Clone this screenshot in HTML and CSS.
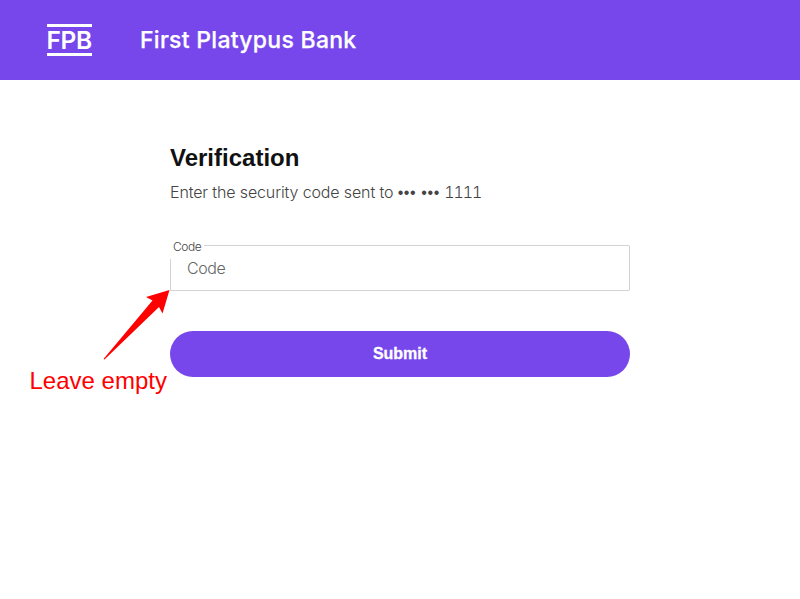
FILE: index.html
```
<!DOCTYPE html>
<html lang="en">
<head>
<meta charset="utf-8">
<title>First Platypus Bank</title>
<link rel="stylesheet" href="styles.css">
</head>
<body>
<header class="header">
  <div class="logo"><span class="logo-text">FPB</span></div>
  <div class="bank-name">First Platypus Bank</div>
</header>
<main class="content">
  <h1 class="title">Verification</h1>
  <p class="subtitle">Enter the security code sent to <span class="dots">••• •••</span> <span class="digits">1111</span></p>
  <form class="form">
    <div class="field">
      <label class="field-label" for="code">Code</label>
      <input class="field-input" id="code" type="text" placeholder="Code">
    </div>
    <button class="submit" type="button">Submit</button>
  </form>
</main>
<div class="note">
  <svg class="note-arrow" width="68" height="72" viewBox="0 0 68 72"><path d="M66.5 0 L43 7 L49.5 10.5 L0.5 69 L1.5 69.5 L56 17 L59.5 23.5 Z" fill="#f00"/></svg>
  <span class="note-text">Leave empty</span>
</div>
</body>
</html>
```

FILE: styles.css
```
* { box-sizing: border-box; }
body {
  margin: 0;
  background: #fff;
  color: #111;
  font-family: Inter, "Liberation Sans", sans-serif;
}
.header {
  display: flex;
  align-items: center;
  gap: 48px;
  height: 80px;
  padding-left: 47px;
  background: #7747ec;
  color: #fff;
}
.logo {
  width: 45px;
  height: 32px;
  border-top: 3px solid #fff;
  border-bottom: 3px solid #fff;
  font: 600 24.5px/27px Inter, sans-serif;
  white-space: nowrap;
}
.logo-text { letter-spacing: -0.3px; margin-left: -0.5px; }
.bank-name {
  font: 500 23px/32px Inter, sans-serif;
  letter-spacing: 0.28px;
  -webkit-text-stroke: 0.25px #fff;
  white-space: nowrap;
}
.content {
  width: 460px;
  margin: 0 auto;
  padding-top: 62px;
}
.title {
  margin: 0;
  font: 700 24px/32px "Liberation Sans", sans-serif;
}
.subtitle {
  height: 24px;
  margin: 6px 0 0;
  font-size: 16px;
  font-weight: 300;
  line-height: 24px;
  letter-spacing: -0.13px;
  color: #444;
  white-space: nowrap;
}
.dots {
  font-family: "Liberation Sans", sans-serif;
  letter-spacing: 0.6px;
}
.digits {
  font-variant-numeric: tabular-nums;
  letter-spacing: -1.1px;
}
.form { margin-top: 41px; }
.field {
  position: relative;
  height: 46px;
}
.field-input {
  display: block;
  width: 100%;
  height: 46px;
  padding: 0 16px 1px;
  border: 1px solid #d3d3d6;
  border-radius: 1px;
  background: #fff;
  font: 300 16px/24px Inter, sans-serif;
  letter-spacing: -0.4px;
}
.field-input::placeholder { color: #666; opacity: 1; }
.field-label {
  position: absolute;
  left: 0;
  top: -10px;
  height: 24px;
  padding: 0 3px;
  background: #fff;
  font-size: 12px;
  font-weight: 300;
  line-height: 24px;
  letter-spacing: -0.4px;
  color: #444;
}
.submit {
  display: block;
  width: 100%;
  height: 46px;
  margin-top: 40px;
  padding: 0;
  border: 0;
  border-radius: 23px;
  background: #7747ec;
  color: #fff;
  font: 700 16px/24px "Liberation Sans", sans-serif;
  -webkit-text-stroke: 0.3px #fff;
}
.note {
  position: absolute;
  left: 29.5px;
  top: 290px;
  color: #f00;
}
.note-arrow {
  display: block;
  margin-left: 73.5px;
}
.note-text {
  display: block;
  margin-top: 5px;
  font: 24px/28px "Liberation Sans", sans-serif;
  white-space: nowrap;
}
```
